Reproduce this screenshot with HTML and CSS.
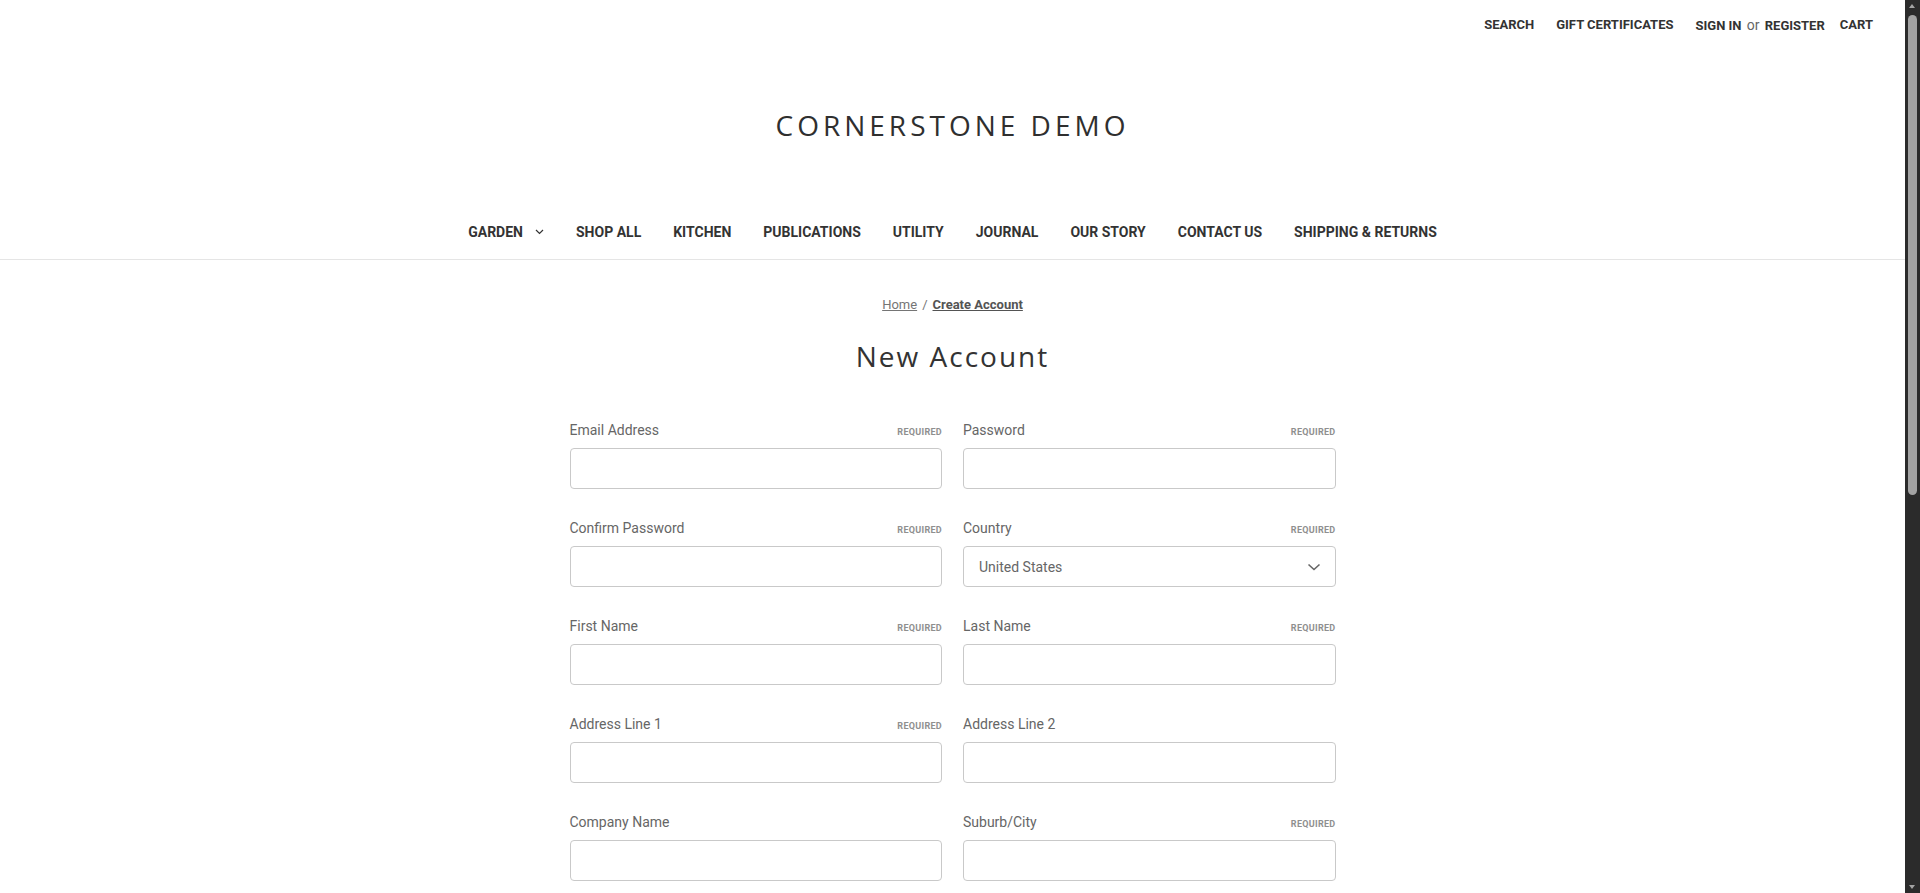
FILE: index.html
```html
<!DOCTYPE html>
<html lang="en">
<head>
<meta charset="utf-8">
<title>Create Account - Cornerstone Demo</title>
<link rel="stylesheet" href="styles.css">
</head>
<body>
<header class="header">
  <nav class="navuser">
    <a class="navuser-item" href="#">Search</a>
    <a class="navuser-item" href="#">Gift Certificates</a>
    <span class="navuser-item"><a href="#">Sign in</a> <span class="or">or</span> <a href="#">Register</a></span>
    <a class="navuser-item cart" href="#">Cart</a>
  </nav>
  <div class="logo-wrap">
    <a class="logo" href="#">Cornerstone Demo</a>
  </div>
  <nav class="navpages">
    <a class="navpages-item" href="#">Garden <svg class="chev-small" width="9" height="6" viewBox="0 0 9 6"><path d="M1 1l3.5 3.5L8 1" fill="none" stroke="#333" stroke-width="1.2"/></svg></a>
    <a class="navpages-item" href="#">Shop All</a>
    <a class="navpages-item" href="#">Kitchen</a>
    <a class="navpages-item" href="#">Publications</a>
    <a class="navpages-item" href="#">Utility</a>
    <a class="navpages-item" href="#">Journal</a>
    <a class="navpages-item" href="#">Our Story</a>
    <a class="navpages-item" href="#">Contact Us</a>
    <a class="navpages-item" href="#">Shipping &amp; Returns</a>
  </nav>
</header>
<main class="page">
  <nav class="breadcrumbs">
    <a class="crumb" href="#">Home</a>
    <span class="sep">/</span>
    <a class="crumb current" href="#">Create Account</a>
  </nav>
  <h1 class="page-heading">New Account</h1>
  <form class="account-form">
    <div class="field">
      <label class="field-label">Email Address <small>Required</small></label>
      <input class="field-input" type="email">
    </div>
    <div class="field">
      <label class="field-label">Password <small>Required</small></label>
      <input class="field-input" type="password">
    </div>
    <div class="field">
      <label class="field-label">Confirm Password <small>Required</small></label>
      <input class="field-input" type="password">
    </div>
    <div class="field">
      <label class="field-label">Country <small>Required</small></label>
      <div class="field-select">
        <span>United States</span>
        <svg class="chev" width="14" height="8" viewBox="0 0 14 8"><path d="M1.5 1.5L7 6.5l5.5-5" fill="none" stroke="#666" stroke-width="1.6"/></svg>
      </div>
    </div>
    <div class="field">
      <label class="field-label">First Name <small>Required</small></label>
      <input class="field-input" type="text">
    </div>
    <div class="field">
      <label class="field-label">Last Name <small>Required</small></label>
      <input class="field-input" type="text">
    </div>
    <div class="field">
      <label class="field-label">Address Line 1 <small>Required</small></label>
      <input class="field-input" type="text">
    </div>
    <div class="field">
      <label class="field-label">Address Line 2</label>
      <input class="field-input" type="text">
    </div>
    <div class="field">
      <label class="field-label">Company Name</label>
      <input class="field-input" type="text">
    </div>
    <div class="field">
      <label class="field-label">Suburb/City <small>Required</small></label>
      <input class="field-input" type="text">
    </div>
    <div class="field">
      <label class="field-label">State/Province <small>Required</small></label>
      <input class="field-input" type="text">
    </div>
    <div class="field">
      <label class="field-label">Zip/Postcode <small>Required</small></label>
      <input class="field-input" type="text">
    </div>
    <div class="field">
      <label class="field-label">Phone Number</label>
      <input class="field-input" type="text">
    </div>
  </form>
</main>
<div class="scrollbar" aria-hidden="true">
  <span class="sb-arrow up"></span>
  <span class="sb-thumb"></span>
  <span class="sb-arrow down"></span>
</div>
</body>
</html>
```

FILE: styles.css
```css
* { box-sizing: border-box; }
html, body { margin: 0; padding: 0; background: #fff; }
body {
  margin-right: 15px;
  font-family: Roboto, "Liberation Sans", sans-serif;
  color: #333;
}
a { color: inherit; text-decoration: none; }

.navuser {
  display: flex;
  justify-content: flex-end;
  align-items: center;
  height: 49px;
  padding-right: 32px;
  font-size: 13px;
  font-weight: 700;
  text-transform: uppercase;
  color: #333;
}
.navuser-item { margin-left: 22px; }
.navuser-item.cart { margin-left: 15px; }
.navuser .or {
  margin: 0 2px;
  text-transform: none;
  font-weight: 400;
  font-size: 14px;
  color: #666;
}

.logo-wrap {
  text-align: center;
  padding: 56px 0 60px;
}
.logo {
  display: inline-block;
  font-family: "Open Sans", sans-serif;
  font-size: 28px;
  line-height: 40px;
  letter-spacing: 4px;
  text-transform: uppercase;
  color: #2f2f2f;
}

.navpages {
  display: flex;
  justify-content: center;
  padding: 18px 0;
  border-bottom: 1px solid #e5e5e5;
  font-size: 14px;
  line-height: 18px;
  font-weight: 700;
  text-transform: uppercase;
  color: #333;
}
.navpages-item {
  display: flex;
  align-items: center;
  padding: 0 16px;
}
.chev-small { margin-left: 12px; }

.page { padding-bottom: 60px; }
.breadcrumbs {
  display: flex;
  justify-content: center;
  gap: 5px;
  margin-top: 36px;
  font-size: 13px;
  line-height: 18px;
  color: #757575;
}
.crumb { text-decoration: underline; }
.crumb.current { font-weight: 700; color: #545454; }

.page-heading {
  margin: 24px 0 0;
  text-align: center;
  font-family: "Open Sans", sans-serif;
  font-weight: 400;
  font-size: 28px;
  line-height: 36px;
  letter-spacing: 2px;
  color: #333;
}

.account-form {
  width: 787px;
  margin: 46px auto 0;
  display: grid;
  grid-template-columns: 1fr 1fr;
}
.field {
  padding: 0 10.5px;
  margin-bottom: 29px;
}
.field-label {
  display: flex;
  justify-content: space-between;
  align-items: baseline;
  height: 20px;
  font-size: 14px;
  line-height: 20px;
  color: #666;
  margin-bottom: 8px;
}
.field-label small {
  font-size: 9px;
  line-height: 1;
  font-weight: 700;
  text-transform: uppercase;
  letter-spacing: 0.3px;
  color: #8f8f8f;
}
.field-input, .field-select {
  display: block;
  width: 100%;
  height: 41px;
  margin: 0;
  border: 1px solid #c9c9c9;
  border-radius: 4px;
  background: #fff;
  font-family: inherit;
  font-size: 14px;
}
.field-select {
  display: flex;
  align-items: center;
  justify-content: space-between;
  padding: 0 14px 0 15px;
  color: #666;
}

.scrollbar {
  position: fixed;
  top: 0;
  right: 0;
  width: 15px;
  height: 100vh;
  background: #2b2b2b;
}
.sb-thumb {
  position: absolute;
  top: 15px;
  left: 3px;
  width: 9px;
  height: 480px;
  border-radius: 5px;
  background: #a3a3a3;
}
.sb-arrow {
  position: absolute;
  left: 4px;
  width: 0;
  height: 0;
  border-left: 3.5px solid transparent;
  border-right: 3.5px solid transparent;
}
.sb-arrow.up { top: 4px; border-bottom: 4px solid #a3a3a3; }
.sb-arrow.down { bottom: 4px; border-top: 4px solid #a3a3a3; }
```
